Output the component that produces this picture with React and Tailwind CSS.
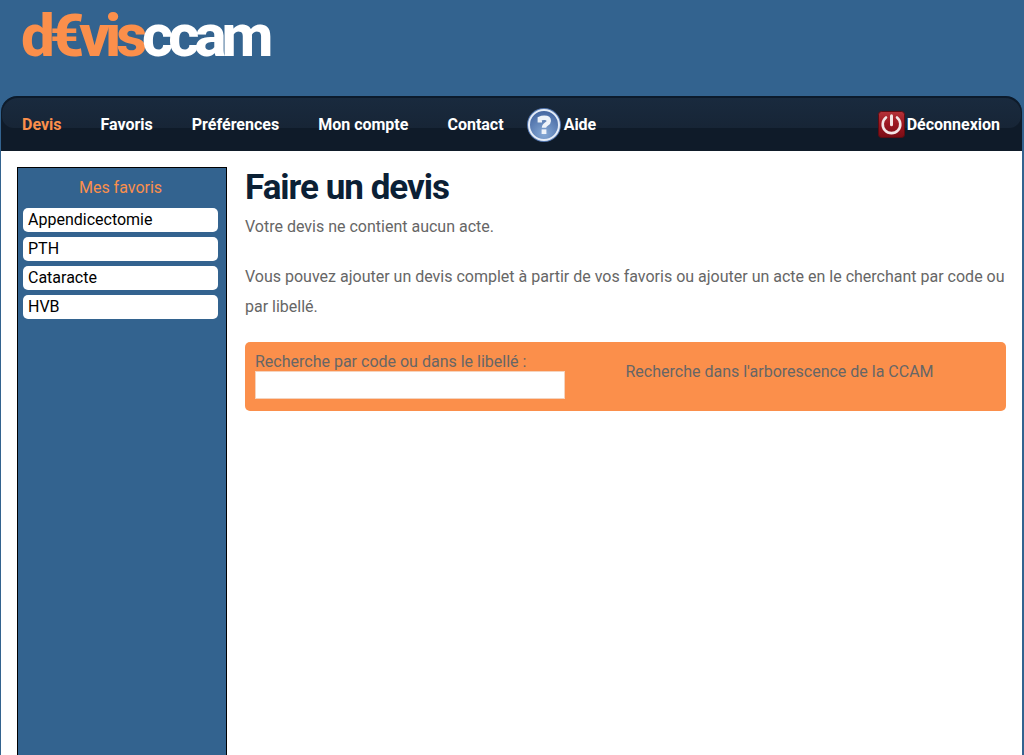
const NAV_ITEMS = ['Devis', 'Favoris', 'Préférences', 'Mon compte', 'Contact'];
const FAVORITES = ['Appendicectomie', 'PTH', 'Cataracte', 'HVB'];

function HelpIcon() {
  return (
    <svg width="34" height="34" viewBox="0 0 34 34" aria-hidden="true">
      <defs>
        <radialGradient id="help-fill" cx="50%" cy="80%" r="75%">
          <stop offset="0" stopColor="#86a9d6" />
          <stop offset="1" stopColor="#4668a2" />
        </radialGradient>
      </defs>
      <circle cx="17" cy="17" r="17" fill="#5578b0" />
      <circle cx="17" cy="17" r="15" fill="url(#help-fill)" stroke="#e6edf8" strokeWidth="2" />
      <path
        d="M12.8 14.4v-3.8c1.2-.6 2.6-.9 4.4-.9 3.2 0 4.6 1 4.6 3.2 0 3.2-4.8 3-4.8 6.8"
        fill="none"
        stroke="#eef3fa"
        strokeWidth="4.4"
      />
      <rect x="14.6" y="21.4" width="4.8" height="4.6" fill="#eef3fa" />
    </svg>
  );
}

function PowerIcon() {
  return (
    <svg width="27" height="27" viewBox="0 0 27 27" aria-hidden="true">
      <defs>
        <linearGradient id="power-fill" x1="0" y1="0" x2="0" y2="1">
          <stop offset="0" stopColor="#b5333a" />
          <stop offset="0.5" stopColor="#9a1620" />
          <stop offset="1" stopColor="#7a0d15" />
        </linearGradient>
      </defs>
      <rect x="0.5" y="0.5" width="26" height="26" rx="3" fill="url(#power-fill)" stroke="#5d0c12" />
      <path d="M8 6.5a8.8 8.8 0 1 0 11 0" fill="none" stroke="#f3e6e6" strokeWidth="2.6" strokeLinecap="round" />
      <path d="M13.5 4.8v9" stroke="#f3e6e6" strokeWidth="3" strokeLinecap="round" />
    </svg>
  );
}

function NavBar() {
  return (
    <nav className="relative flex h-[55px] items-center rounded-t-2xl border-t-2 border-[#0b1a2b] bg-[#0f1b29] pl-[21px] pr-[22px] font-bold text-white">
      {/* glossy upper half */}
      <div className="absolute inset-x-px top-0 h-[30px] rounded-t-2xl rounded-b-xl bg-linear-to-b from-[#192a3e] to-[#172536]" />
      <ul className="relative flex items-center gap-[39px]">
        {NAV_ITEMS.map((item) => (
          <li key={item}>
            <a href="#" className={item === 'Devis' ? 'text-[#fb8f4b]' : ''}>
              {item}
            </a>
          </li>
        ))}
      </ul>
      <a href="#" className="relative ml-[23px] flex items-center gap-[3px]">
        <HelpIcon />
        Aide
      </a>
      <a href="#" className="relative ml-auto flex items-center gap-[2px]">
        <PowerIcon />
        Déconnexion
      </a>
    </nav>
  );
}

function Sidebar() {
  return (
    <aside className="w-[210px] shrink-0 border border-b-0 border-black bg-[#33638f] pl-[5px] pr-2 pt-[5px]">
      <h2 className="mb-[5px] text-center leading-[30px] text-[#fb8f4b]">Mes favoris</h2>
      <ul className="flex flex-col gap-[5px]">
        {FAVORITES.map((name) => (
          <li key={name}>
            <button type="button" className="block h-6 w-full rounded-[5px] bg-white px-[5px] text-left text-black">
              {name}
            </button>
          </li>
        ))}
      </ul>
    </aside>
  );
}

function SearchPanel() {
  return (
    <form className="mt-5 grid grid-cols-2 rounded-[5px] bg-[#fb8f4b] px-[10px] pb-3 pt-[10px]">
      <div>
        <label htmlFor="search" className="block leading-[19px]">
          Recherche par code ou dans le libellé :
        </label>
        <input
          id="search"
          type="text"
          className="block h-7 w-full max-w-[310px] border border-[#f5d3bd] bg-white px-1 text-black"
        />
      </div>
      <a href="#" className="leading-10">
        Recherche dans l'arborescence de la CCAM
      </a>
    </form>
  );
}

export default function App() {
  return (
    <div className="flex min-h-screen flex-col bg-[#33638f] pl-px pr-[2px] font-[Roboto,sans-serif] text-base text-[#666]">
      <header className="h-24 pl-5">
        <a href="#" className="inline-block text-[60px] font-extrabold leading-[72px] tracking-[-5px] text-white">
          <span className="text-[#fb8f4b]">d€vis</span>ccam
        </a>
      </header>
      <NavBar />
      <div className="flex grow gap-[18px] bg-white pl-4 pr-4 pt-4">
        <Sidebar />
        <main className="min-w-0 grow">
          <h1 className="text-[35px] font-bold leading-[41px] tracking-[-1px] text-[#0b2035]">Faire un devis</h1>
          <p className="mt-1 leading-[30px]">Votre devis ne contient aucun acte.</p>
          <p className="mt-5 leading-[30px]">
            Vous pouvez ajouter un devis complet à partir de vos favoris ou ajouter un acte en le cherchant par code ou
            par libellé.
          </p>
          <SearchPanel />
        </main>
      </div>
    </div>
  );
}
